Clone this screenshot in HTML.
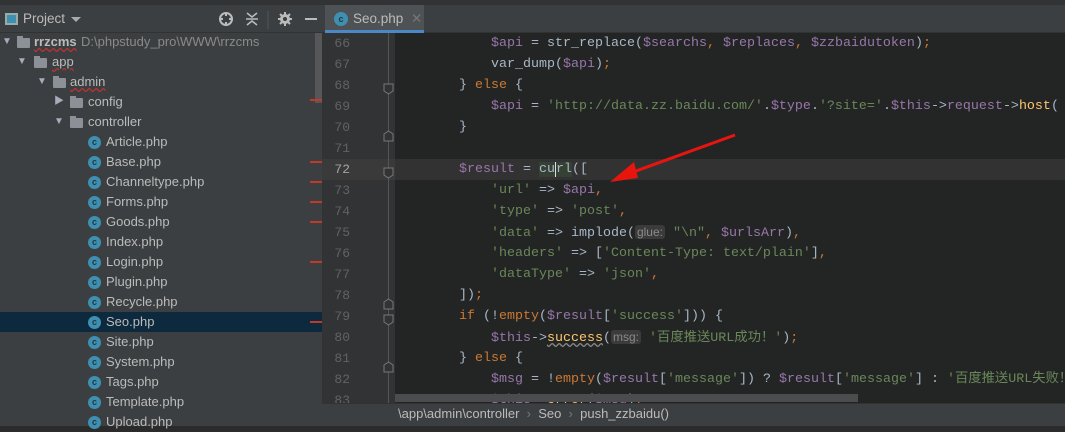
<!DOCTYPE html>
<html><head><meta charset="utf-8"><style>
*{margin:0;padding:0;box-sizing:border-box}
body{width:1065px;height:426px;overflow:hidden;background:#2b2b2b;position:relative;font-family:"Liberation Sans","Noto Sans CJK SC",sans-serif}
.abs{position:absolute}
#side{left:0;top:5px;width:322px;height:421px;background:#3c3f41}
#top{left:0;top:0;width:1065px;height:5px;background:#313335}
.hdr{color:#bbbbbb;font-size:13.5px}
.row{position:absolute;left:0;width:322px;height:20px;line-height:20px;color:#bbbbbb;font-size:13px}
.row span{position:absolute}
.fold{width:13px;height:10px;background:#8c9197;border-radius:1px}
.fold:before{content:"";position:absolute;left:0;top:-2px;width:6px;height:3px;background:#8c9197}
.tri{font-size:10px;color:#aab}
.ci{width:13px;height:13px;border-radius:50%;background:#3f8fb0;top:4px;color:#1e3a48;font-size:9px;line-height:13px;text-align:center;font-weight:bold}
.red{left:310px;top:9px;width:12px;height:2px;background:#c0392b}
#gut{left:322px;top:33px;width:73px;height:370px;background:#313335}
#ed{left:395px;top:33px;width:670px;height:370px;background:#232525}
.ln{position:absolute;left:322px;width:28px;text-align:right;color:#606366;font-family:"Liberation Mono",monospace;font-size:13px;height:21px;line-height:21px}
.cl{position:absolute;left:395px;height:21px;line-height:21px;font-family:"Liberation Mono","Noto Sans CJK SC",monospace;font-size:13.33px;color:#a9b7c6;white-space:pre}
.v{color:#9876aa}.s{color:#6a8759}.k{color:#cc7832}.f{color:#ffc66d}
.hint{background:#3b3b3b;color:#8a8a8a;font-family:"Liberation Sans",sans-serif;font-size:12px;padding:0 2px;border-radius:3px}
</style></head><body>
<div id="top" class="abs"></div>
<div id="side" class="abs"></div>
<div class="abs" style="left:0;top:5px;width:1065px;height:28px;background:#3c3f41;border-bottom:1px solid #323232"></div>
<div class="abs" style="left:5px;top:13px;width:13px;height:12px;border:2px solid #9aa;background:#3f8fb0"></div>
<div class="abs hdr" style="left:23px;top:11px">Project</div>
<div class="abs" style="left:71px;top:17px;border:5px solid transparent;border-top:5px solid #aaa"></div>
<svg class="abs" style="left:218px;top:11px" width="110" height="18" viewBox="0 0 110 18"><circle cx="8" cy="8" r="6" fill="none" stroke="#bbb" stroke-width="2"/><path d="M8 1v4M8 11v4M1 8h4M11 8h4" stroke="#bbb" stroke-width="2"/><path d="M29 2l5 4 5-4M29 14l5-4 5 4M28 8h12" stroke="#bbb" stroke-width="1.6" fill="none"/><line x1="50" y1="0" x2="50" y2="18" stroke="#555"/><circle cx="67" cy="8" r="5" fill="#bbb"/><path d="M67 1v14M60 8h14M62 3l10 10M72 3l-10 10" stroke="#bbb" stroke-width="2"/><circle cx="67" cy="8" r="2" fill="#3c3f41"/><path d="M87 8h12" stroke="#bbb" stroke-width="2"/></svg>
<div class="abs" style="left:325px;top:5px;width:99px;height:28px;background:#4e5254"></div>
<div class="abs" style="left:325px;top:30px;width:99px;height:3px;background:#4a88c7"></div>
<div class="abs ci" style="left:334px;top:12px;width:14px;height:14px;line-height:14px">c</div>
<div class="abs hdr" style="left:353px;top:11px">Seo.php <span style="color:#777;margin-left:4px">✕</span></div>
<div class="abs" style="left:315px;top:33px;width:7px;height:70px;background:#555759"></div>
<div class="row" style="top:32px"><span class="tri" style="left:2px">▼</span><span class="fold abs" style="left:17px;top:6px"></span><span style="left:34px;font-weight:bold;text-decoration:underline wavy #b33">rrzcms</span><span style="left:81px;color:#8a8a8a">D:\phpstudy_pro\WWW\rrzcms</span></div>
<div class="row" style="top:52px"><span class="tri" style="left:17px">▼</span><span class="fold abs" style="left:34px;top:6px"></span><span style="left:52px;text-decoration:underline wavy #b33">app</span></div>
<div class="row" style="top:72px"><span class="tri" style="left:37px">▼</span><span class="fold abs" style="left:53px;top:6px"></span><span style="left:70px;text-decoration:underline wavy #b33">admin</span></div>
<div class="row" style="top:92px"><span class="tri" style="left:54px">▶</span><span class="fold abs" style="left:70px;top:6px"></span><span style="left:88px">config</span><div class="abs red" style="top:7px"></div></div>
<div class="row" style="top:112px"><span class="tri" style="left:54px">▼</span><span class="fold abs" style="left:70px;top:6px"></span><span style="left:88px">controller</span></div>
<div class="row" style="top:132px"><span class="ci" style="left:88px">c</span><span style="left:106px">Article.php</span></div>
<div class="row" style="top:152px"><span class="ci" style="left:88px">c</span><span style="left:106px">Base.php</span><div class="abs red"></div></div>
<div class="row" style="top:172px"><span class="ci" style="left:88px">c</span><span style="left:106px">Channeltype.php</span><div class="abs red"></div></div>
<div class="row" style="top:192px"><span class="ci" style="left:88px">c</span><span style="left:106px">Forms.php</span><div class="abs red"></div></div>
<div class="row" style="top:212px"><span class="ci" style="left:88px">c</span><span style="left:106px">Goods.php</span><div class="abs red"></div></div>
<div class="row" style="top:232px"><span class="ci" style="left:88px">c</span><span style="left:106px">Index.php</span></div>
<div class="row" style="top:252px"><span class="ci" style="left:88px">c</span><span style="left:106px">Login.php</span><div class="abs red"></div></div>
<div class="row" style="top:272px"><span class="ci" style="left:88px">c</span><span style="left:106px">Plugin.php</span></div>
<div class="row" style="top:292px"><span class="ci" style="left:88px">c</span><span style="left:106px">Recycle.php</span></div>
<div class="row" style="top:312px;background:#0d293e"><span class="ci" style="left:88px">c</span><span style="left:106px">Seo.php</span><div class="abs red"></div></div>
<div class="row" style="top:332px"><span class="ci" style="left:88px">c</span><span style="left:106px">Site.php</span></div>
<div class="row" style="top:352px"><span class="ci" style="left:88px">c</span><span style="left:106px">System.php</span></div>
<div class="row" style="top:372px"><span class="ci" style="left:88px">c</span><span style="left:106px">Tags.php</span></div>
<div class="row" style="top:392px"><span class="ci" style="left:88px">c</span><span style="left:106px">Template.php</span></div>
<div class="row" style="top:412px"><span class="ci" style="left:88px">c</span><span style="left:106px">Upload.php</span></div>
<div id="gut" class="abs"></div>
<div id="ed" class="abs"></div>
<div class="abs" style="left:395px;top:159px;width:670px;height:21px;background:#323232"></div>
<div class="abs" style="left:322px;top:159px;width:73px;height:21px;background:#3a3a3a"></div>
<div class="abs" style="left:388px;top:33px;width:1px;height:370px;background:#555"></div>
<svg class="abs" style="left:383px;top:33px" width="12" height="370"><g fill="#313335" stroke="#777"><path d="M1 51h9v7l-4.5 3-4.5-3z"/><path d="M1 101l4.5-3 4.5 3v7h-9z"/><path d="M1 135h9v7l-4.5 3-4.5-3z"/><path d="M1 269l4.5-3 4.5 3v7h-9z"/><path d="M1 282h9v7l-4.5 3-4.5-3z"/><path d="M1 332l4.5-3 4.5 3v7h-9z"/></g></svg>
<div class="ln" style="top:33px">66</div><div class="ln" style="top:54px">67</div><div class="ln" style="top:75px">68</div><div class="ln" style="top:96px">69</div><div class="ln" style="top:117px">70</div><div class="ln" style="top:138px">71</div><div class="ln" style="top:159px;color:#a4a3a3">72</div><div class="ln" style="top:180px">73</div><div class="ln" style="top:201px">74</div><div class="ln" style="top:222px">75</div><div class="ln" style="top:243px">76</div><div class="ln" style="top:264px">77</div><div class="ln" style="top:285px">78</div><div class="ln" style="top:306px">79</div><div class="ln" style="top:327px">80</div><div class="ln" style="top:348px">81</div><div class="ln" style="top:369px">82</div><div class="ln" style="top:390px">83</div>
<div class="cl" style="top:33px">            <span class="v">$api</span> = str_replace(<span class="v">$searchs</span><span class="k">,</span> <span class="v">$replaces</span><span class="k">,</span> <span class="v">$zzbaidutoken</span>)<span class="k">;</span></div>
<div class="cl" style="top:54px">            var_dump(<span class="v">$api</span>)<span class="k">;</span></div>
<div class="cl" style="top:75px">        } <span class="k">else</span> {</div>
<div class="cl" style="top:96px">            <span class="v">$api</span> = <span class="s">'http://data.zz.baidu.com/'</span>.<span class="v">$type</span>.<span class="s">'?site='</span>.<span class="v">$this</span>-><span class="v">request</span>-><span class="f">host</span>(</div>
<div class="cl" style="top:117px">        }</div>
<div class="cl" style="top:159px">        <span class="v">$result</span> = <span style="background:#344134">cu</span><span style="background:#344134;border-left:1px solid #ddd">rl</span>([</div>
<div class="cl" style="top:180px">            <span class="s">'url'</span> => <span class="v">$api</span><span class="k">,</span></div>
<div class="cl" style="top:201px">            <span class="s">'type'</span> => <span class="s">'post'</span><span class="k">,</span></div>
<div class="cl" style="top:222px">            <span class="s">'data'</span> => implode(<span class="hint">glue:</span> <span class="s">"\n"</span><span class="k">,</span> <span class="v">$urlsArr</span>)<span class="k">,</span></div>
<div class="cl" style="top:243px">            <span class="s">'headers'</span> => [<span class="s">'Content-Type: text/plain'</span>]<span class="k">,</span></div>
<div class="cl" style="top:264px">            <span class="s">'dataType'</span> => <span class="s">'json'</span><span class="k">,</span></div>
<div class="cl" style="top:285px">        ])<span class="k">;</span></div>
<div class="cl" style="top:306px">        <span class="k">if</span> (!<span class="k">empty</span>(<span class="v">$result</span>[<span class="s">'success'</span>])) {</div>
<div class="cl" style="top:327px">            <span class="v">$this</span>-><span class="f" style="text-decoration:underline wavy #888">success</span>(<span class="hint">msg:</span> <span class="s">'百度推送URL成功！'</span>)<span class="k">;</span></div>
<div class="cl" style="top:348px">        } <span class="k">else</span> {</div>
<div class="cl" style="top:369px">            <span class="v">$msg</span> = !<span class="k">empty</span>(<span class="v">$result</span>[<span class="s">'message'</span>]) ? <span class="v">$result</span>[<span class="s">'message'</span>] : <span class="s">'百度推送URL失败！'</span></div>
<div class="cl" style="top:390px">            <span class="v">$this</span>-><span class="f">error</span>(<span class="v">$msg</span>)<span class="k">;</span></div>
<div class="abs" style="left:395px;top:394px;width:463px;height:8px;background:#4a4c4e"></div>
<div class="abs" style="left:322px;top:403px;width:743px;height:23px;background:#3c3f41;border-top:1px solid #323232"></div>
<div class="abs" style="left:398px;top:406px;color:#bbb;font-size:13px;white-space:pre">\app\admin\controller  <span style="color:#777">›</span>  Seo  <span style="color:#777">›</span>  push_zzbaidu()</div>
<svg class="abs" style="left:600px;top:130px" width="140" height="60"><path d="M135 5L25 45" stroke="#e8150f" stroke-width="3"/><path d="M10 52L34 32L38 48Z" fill="#e8150f"/></svg>
</body></html>
